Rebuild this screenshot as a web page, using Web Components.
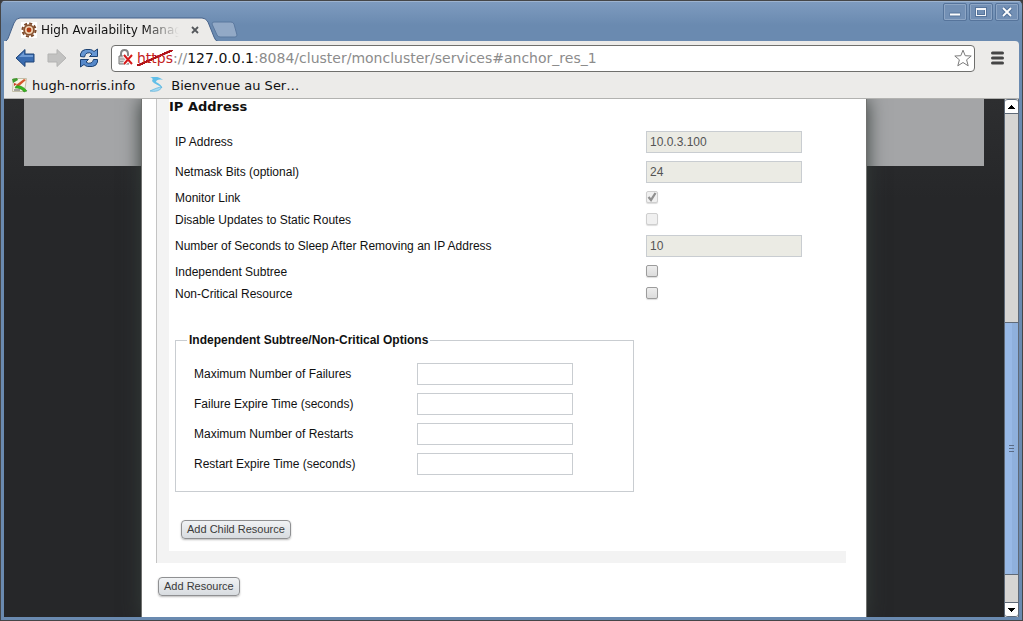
<!DOCTYPE html>
<html lang="en">
<head>
<meta charset="utf-8">
<title>High Availability Management</title>
<style>
	body { margin: 0; background: #3c3c3e; font-family: 'DejaVu Sans', sans-serif; font-size: 14px; color: #111; }
</style>
</head>
<body>
<browser-window>
	<browser-tab slot="tabs">High Availability Management</browser-tab>
	<address-bar slot="toolbar"></address-bar>
	<bookmark-link slot="bookmarks" icon="notes" href="#hugh">hugh-norris.info</bookmark-link>
	<bookmark-link slot="bookmarks" icon="swirl" href="#bienvenue">Bienvenue au Ser…</bookmark-link>
	<cluster-page>
		<resource-panel heading="IP Address">
			<field-row label="IP Address" value="10.0.3.100" disabled></field-row>
			<field-row label="Netmask Bits (optional)" value="24" disabled></field-row>
			<field-row label="Monitor Link" type="checkbox" checked disabled></field-row>
			<field-row label="Disable Updates to Static Routes" type="checkbox" disabled></field-row>
			<field-row label="Number of Seconds to Sleep After Removing an IP Address" value="10" disabled></field-row>
			<field-row label="Independent Subtree" type="checkbox"></field-row>
			<field-row label="Non-Critical Resource" type="checkbox"></field-row>
			<option-group slot="options" legend="Independent Subtree/Non-Critical Options">
				<field-row label="Maximum Number of Failures"></field-row>
				<field-row label="Failure Expire Time (seconds)"></field-row>
				<field-row label="Maximum Number of Restarts"></field-row>
				<field-row label="Restart Expire Time (seconds)"></field-row>
			</option-group>
			<action-button slot="actions">Add Child Resource</action-button>
		</resource-panel>
		<action-button slot="actions">Add Resource</action-button>
	</cluster-page>
	<scroll-rail slot="scroll"></scroll-rail>
</browser-window>

<script>
const BOOKMARK_ICONS = {
	notes: `
		<path d="M1.500 1.500h13l-2 13h-12z" fill="#f7f5e8" stroke="#c3bfa9"/>
		<path d="M0 2l5-1 1 2-5 3z" fill="#3f9a2f"/>
		<path d="M4 8l8-6 2 1-8 7z" fill="#d4572c"/>
		<path d="M2 6l3 1-3 2z" fill="#c93a22"/>
		<path d="M4 9c4-1 8 1 11 5l-3 1c-2-3-5-4-9-4z" fill="#35b51d" stroke="#2c7a1c" stroke-width=".5"/>
		<path d="M2 13h6" stroke="#555"/>`,
	swirl: `
		<path d="M1 0c5-1 10 0 13 3-4-1-7 0-7 2 4 2 6 4 6 6-3-3-8-4-10-7 1-2 1-3-2-4z" fill="#62bfe8"/>
		<path d="M1 14c5 1 10 0 12-4-3 0-8 2-12 4z" fill="#a5dcf4" stroke="#4aa7d8" stroke-width=".6"/>`,
};

class BrowserWindow extends HTMLElement {
	constructor() {
		super();
		this.attachShadow({ mode: 'open' }).innerHTML = `
			<style>
				:host {
					display: flex; flex-direction: column; box-sizing: border-box; height: 100vh; overflow: hidden;
					border: 1px solid #454648; border-radius: 5px 5px 0 0;
					background: linear-gradient(#7f9cc0, #6a8ab0 24px, #6a8ab0);
				}
				.titlebar { display: flex; align-items: flex-end; height: 40px; flex: none; padding: 0 3px; box-shadow: inset 0 1px #9db3cf; }
				.new-tab { border: 0; background: none; padding: 0; margin: 0 0 3px -7px; height: 17px; }
				.controls { margin-left: auto; align-self: flex-start; display: flex; gap: 2px; padding-top: 2px; }
				.controls button { width: 24px; height: 18px; padding: 0; border: 1px solid #56749b; border-radius: 2px; background: #7390b5; box-shadow: inset 0 0 0 1px #8ea6c5; }
				svg { display: block; }
				.frame { flex: 1; min-height: 0; display: flex; flex-direction: column; margin: 0 3px 3px; border-radius: 0 4px 0 0; overflow: hidden; background: #ecebe9; }
				.toolbar { display: flex; align-items: center; height: 34px; flex: none; }
				.bookmarks { display: flex; height: 23px; gap: 14px; padding-left: 8px; align-items: flex-start; border-bottom: 1px solid #b2b2b0; flex: none; }
				.view { flex: 1; min-height: 0; display: flex; }
				.view ::slotted(cluster-page) { flex: 1; }
			</style>
			<div class="titlebar">
				<slot name="tabs"></slot>
				<button class="new-tab" aria-label="New tab">
					<svg width="28" height="17" viewBox="0 0 28 17"><path d="M3 1h17q2 0 3 2l3 11q0 2-2 2H9q-2 0-3-2L1 3q0-2 2-2z" fill="#92a9c6" stroke="#5b789e"/></svg>
				</button>
				<div class="controls">
					<button aria-label="Minimize"><svg width="22" height="16"><path d="M5.500 10.500h11" stroke="#56749b" stroke-width="4"/><path d="M6 10.500h10" stroke="#fff" stroke-width="2"/></svg></button>
					<button aria-label="Maximize"><svg width="22" height="16"><rect x="6.500" y="4.500" width="9" height="7" fill="none" stroke="#56749b" stroke-width="3"/><rect x="6.500" y="4.500" width="9" height="7" fill="none" stroke="#f4f6f9"/><path d="M6 5h10" stroke="#f4f6f9" stroke-width="2"/></svg></button>
					<button aria-label="Close"><svg width="22" height="16"><path d="M7 4l8 8m0-8l-8 8" stroke="#56749b" stroke-width="4"/><path d="M7 4l8 8m0-8l-8 8" stroke="#fff" stroke-width="1.800"/></svg></button>
				</div>
			</div>
			<div class="frame">
				<div class="toolbar"><slot name="toolbar"></slot></div>
				<nav class="bookmarks"><slot name="bookmarks"></slot></nav>
				<div class="view"><slot></slot><slot name="scroll"></slot></div>
			</div>
		`;
	}
}

class BrowserTab extends HTMLElement {
	constructor() {
		super();
		this.attachShadow({ mode: 'open' }).innerHTML = `
			<style>
				:host { display: grid; grid-template-columns: 100%; width: 214px; height: 24px; font-size: 12px; }
				.shape, .inner { grid-area: 1 / 1; }
				.inner { display: flex; align-items: center; padding: 2px 16px 0 17px; }
				.title { flex: 1; min-width: 0; margin: 0 12px 0 4px; overflow: hidden; white-space: nowrap; -webkit-mask-image: linear-gradient(to right, #000 75%, transparent); mask-image: linear-gradient(to right, #000 75%, transparent); }
				button { border: 0; background: none; padding: 0; width: 8px; height: 8px; margin-right: 3px; }
				svg { display: block; }
			</style>
			<svg class="shape" width="214" height="24"><path d="M0 25c3-1 4-3 5-6l5-13q2-5 6-5h182q4 0 6 4l6 15q1 4 5 5" fill="#ecebe9" stroke="#46628b"/></svg>
			<div class="inner">
				<svg width="16" height="16" viewBox="0 0 16 16">
					<path fill="#fff" d="M0 0h16v16H0z"/>
					<circle cx="8" cy="8" r="6.600" fill="none" stroke="#7a4a2c" stroke-width="2" stroke-dasharray="3 2.180"/>
					<circle cx="8" cy="8" r="4.900" fill="#f0d3b4" stroke="#8a5330" stroke-width="1.800"/>
					<circle cx="8" cy="8" r="2.400" fill="#b33c12"/>
				</svg>
				<span class="title"><slot></slot></span>
				<button aria-label="Close tab"><svg width="8" height="8"><path d="M1 1l6 6m0-6l-6 6" stroke="#55585c" stroke-width="1.800"/></svg></button>
			</div>
		`;
	}
}

class AddressBar extends HTMLElement {
	constructor() {
		super();
		this.attachShadow({ mode: 'open' }).innerHTML = `
			<style>
				:host { flex: 1; display: flex; align-items: center; padding: 0 15px 0 11px; }
				button { border: 0; padding: 0; background: none; margin-right: 12px; }
				svg { display: block; flex: none; }
				.box { flex: 1; display: flex; align-items: center; height: 25px; padding: 0 2px 0 6px; margin-right: 16px; border: 1px solid #6f6f6d; border-radius: 4px; background: #fff; color: #8c8c8c; }
				.url { flex: 1; margin-left: 3px; white-space: nowrap; outline: 0; }
				.scheme { color: #c41e24; background: linear-gradient(to top left, transparent 46%, #b01217 47%, #b01217 54%, transparent 55%); }
				.host { color: #111; }
				.box button, button.menu { margin: 0; }
			</style>
			<button aria-label="Back"><svg width="20" height="20"><path d="M1 10l9-8.500v4.500h9v8h-9v4.500z" fill="#3a6cb0" stroke="#1f4478"/><path d="M4 9l5-5v3h9v2z" fill="#6f9bd4"/></svg></button>
			<button aria-label="Forward" disabled><svg width="20" height="20"><path d="M19 10l-9-8.500v4.500H1v8h9v4.500z" fill="#c2c2c1" stroke="#b3b3b2"/></svg></button>
			<button aria-label="Reload"><svg width="20" height="20">
				<path d="M1.500 8.500V6q1-4 5-4.500h5q2 .5 3.500 2l3.500-2.500v7.500h-8l2.500-2.500q-2-2-5-1-2 1-2.500 4z" fill="#6596d3" stroke="#1d4273"/>
				<path d="M18.500 11.500V14q-1 4-5 4.500h-5q-2-.5-3.500-2l-3.500 2.500v-7.500h8l-2.500 2.500q2 2 5 1 2-1 2.500-3.500z" fill="#5588ca" stroke="#1d4273"/>
			</svg></button>
			<div class="box">
				<svg width="16" height="18">
					<path d="M3 8V5q0-4 3.500-4T10 5v3" fill="none" stroke="#858585" stroke-width="2"/>
					<path d="M1 7h10v8H1z" fill="#d2d2d0" stroke="#777"/><path d="M2 10h8M2 12.500h8" stroke="#999"/>
					<path d="M6 6l8 9m0-9l-8 9" stroke="#fff" stroke-width="4"/><path d="M6 6l8 9m0-9l-8 9" stroke="#d51b1b" stroke-width="2"/>
				</svg>
				<div class="url" role="textbox" aria-label="Address" contenteditable="true" spellcheck="false"><span class="scheme">https</span>://<span class="host">127.0.0.1</span>:8084/cluster/moncluster/services#anchor_res_1</div>
				<button aria-label="Bookmark this page"><svg width="18" height="18"><path d="M9 1.200l2.200 5.500 6 .3-4.600 3.800 1.600 6L9 13.500l-5.200 3.300 1.600-6L.8 7l6-.3z" fill="#fff" stroke="#7b7b7b" stroke-linejoin="round"/></svg></button>
			</div>
			<button class="menu" aria-label="Menu"><svg width="13" height="14"><path d="M1.500 2h10M1.500 7h10M1.500 12h10" stroke="#454545" stroke-width="3" stroke-linecap="round"/></svg></button>
		`;
	}
}

class BookmarkLink extends HTMLElement {
	connectedCallback() {
		if (this.shadowRoot) return;
		this.attachShadow({ mode: 'open' }).innerHTML = `
			<style>
				:host { display: block; font-size: 13px; }
				a { display: flex; align-items: center; gap: 4px; height: 20px; color: #111; text-decoration: none; white-space: nowrap; }
				:host([icon='swirl']) a { gap: 6px; }
				svg { display: block; }
			</style>
			<a href="${this.getAttribute('href')}">
				<svg width="16" height="16" aria-hidden="true">${BOOKMARK_ICONS[this.getAttribute('icon')]}</svg>
				<slot></slot>
			</a>
		`;
	}
}

class ClusterPage extends HTMLElement {
	constructor() {
		super();
		this.attachShadow({ mode: 'open' }).innerHTML = `
			<style>
				:host {
					display: block; min-width: 0; overflow: hidden;
					background:
						linear-gradient(#a4a5a7, #a4a5a7) center top / calc(100% - 40px) 67px no-repeat,
						linear-gradient(#2d2e30, #262729 100px);
				}
				main {
					box-sizing: border-box; max-width: 726px; min-height: 100%; margin: 0 auto; padding: 0 20px 0 14px;
					background: #fff; border: solid #70716f; border-width: 0 1px; box-shadow: 0 0 18px #333b38;
				}
				.actions { padding: 14px 0 0 2px; }
			</style>
			<main>
				<slot></slot>
				<div class="actions"><slot name="actions"></slot></div>
			</main>
		`;
	}
}

class ResourcePanel extends HTMLElement {
	connectedCallback() {
		if (this.shadowRoot) return;
		this.attachShadow({ mode: 'open' }).innerHTML = `
			<style>
				:host { display: block; border-left: 1px solid #c4c4c4; --label-column: 1fr; --input-column: 200px; }
				section { border: solid #f3f3f3; border-width: 0 0 12px 12px; }
				h3 { margin: 0 0 12px; font-size: 13px; line-height: 16px; }
				.body { padding-left: 6px; }
				.options { padding-top: 27px; }
				.actions { padding: 28px 0 12px 6px; }
			</style>
			<section>
				<h3>${this.getAttribute('heading')}</h3>
				<div class="body">
					<slot></slot>
					<div class="options"><slot name="options"></slot></div>
					<div class="actions"><slot name="actions"></slot></div>
				</div>
			</section>
		`;
	}
}

class FieldRow extends HTMLElement {
	connectedCallback() {
		if (this.shadowRoot) return;
		const type = this.getAttribute('type') || 'text';
		const flags = ['checked', 'disabled'].filter((name) => this.hasAttribute(name)).join(' ');
		this.attachShadow({ mode: 'open' }).innerHTML = `
			<style>
				:host {
					display: grid; grid-template-columns: var(--label-column) var(--input-column); align-items: center; height: 30px;
					font: 12px 'Liberation Sans', sans-serif;
				}
				:host([type='checkbox']) { height: 22px; }
				label { white-space: nowrap; }
				input { margin: 0; box-sizing: border-box; }
				input[type='text'] {
					width: 156px; height: 22px; padding: 0 3px; border: 1px solid #c9cdd1; background: #fff;
					font: inherit; color: #333;
				}
				input[type='text']:disabled { background: #ebebe4; color: #545454; }
				input[type='checkbox'] {
					appearance: none; width: 12px; height: 12px; margin-bottom: 2px; border: 1px solid #9c9c9c; border-radius: 2px;
					background: linear-gradient(#ededed, #dcdcdc); box-shadow: 0 1px 1px #ddd;
				}
				input[type='checkbox']:disabled { border-color: #cfcfcf; background: #f0f0f0; }
				input[type='checkbox']:checked {
					background: #f0f0f0 url("data:image/svg+xml,%3Csvg xmlns='http://www.w3.org/2000/svg' width='10' height='10'%3E%3Cpath d='M1.500 5l2.500 3 4.500-7' fill='none' stroke='%23909090' stroke-width='2.300'/%3E%3C/svg%3E");
				}
			</style>
			<label for="field">${this.getAttribute('label')}</label>
			<input id="field" type="${type}" ${type === 'text' ? `value="${this.getAttribute('value') || ''}"` : ''} ${flags}>
		`;
	}
}

class OptionGroup extends HTMLElement {
	connectedCallback() {
		if (this.shadowRoot) return;
		this.attachShadow({ mode: 'open' }).innerHTML = `
			<style>
				:host { display: block; --label-column: 223px; --input-column: 1fr; }
				fieldset { box-sizing: border-box; max-width: 459px; min-width: 0; margin: 0; padding: 11px 18px 12px; border: 1px solid #c9cdd1; }
				legend { margin-left: -7px; padding: 0 2px; font: bold 12px/16px 'Liberation Sans', sans-serif; }
			</style>
			<fieldset>
				<legend>${this.getAttribute('legend')}</legend>
				<slot></slot>
			</fieldset>
		`;
	}
}

class ActionButton extends HTMLElement {
	constructor() {
		super();
		this.attachShadow({ mode: 'open' }).innerHTML = `
			<style>
				:host { display: block; }
				button {
					display: block; height: 19px; padding: 0 5px 1px; border: 1px solid #8f9092; border-radius: 4px;
					background: linear-gradient(#f0f2f4, #d8dce0); box-shadow: 0 1px 2px #bbb;
					font: 11px 'Liberation Sans', sans-serif; color: #3a3a3a; white-space: nowrap;
				}
			</style>
			<button type="button"><slot></slot></button>
		`;
	}
}

class ScrollRail extends HTMLElement {
	constructor() {
		super();
		this.attachShadow({ mode: 'open' }).innerHTML = `
			<style>
				:host { display: flex; flex-direction: column; box-sizing: border-box; width: 15px; border: solid #5f6a78; border-width: 0 1px; background: #d6d5d3; }
				button { height: 15px; flex: none; padding: 0; border: solid #5f6a78; border-width: 1px 0; border-radius: 3px 3px 0 0; background: #fff; }
				button:last-child { border-radius: 0 0 3px 3px; }
				svg { display: block; margin: auto; }
				.track { flex: 1; display: grid; grid-template-rows: 208fr 253fr 27fr; }
				.thumb {
					grid-row: 2; display: grid; place-items: center; border: solid #5f6a78; border-width: 1px 0;
					background: linear-gradient(to right, #98b9e6 50%, #8fb0dc 50%);
				}
			</style>
			<button aria-label="Scroll up"><svg width="7" height="4"><path d="M3 0h1v1h1v1h1v1h1v1H0V3h1V2h1V1h1z"/></svg></button>
			<div class="track"><div class="thumb"><svg width="5" height="7"><path d="M0 .5h5M0 3.500h5M0 6.500h5" stroke="#5a6b85"/></svg></div></div>
			<button aria-label="Scroll down"><svg width="7" height="4"><path d="M3 4h1V3h1V2h1V1h1V0H0v1h1v1h1v1h1z"/></svg></button>
		`;
	}
}

customElements.define('browser-window', BrowserWindow);
customElements.define('browser-tab', BrowserTab);
customElements.define('address-bar', AddressBar);
customElements.define('bookmark-link', BookmarkLink);
customElements.define('cluster-page', ClusterPage);
customElements.define('resource-panel', ResourcePanel);
customElements.define('field-row', FieldRow);
customElements.define('option-group', OptionGroup);
customElements.define('action-button', ActionButton);
customElements.define('scroll-rail', ScrollRail);
</script>
</body>
</html>
